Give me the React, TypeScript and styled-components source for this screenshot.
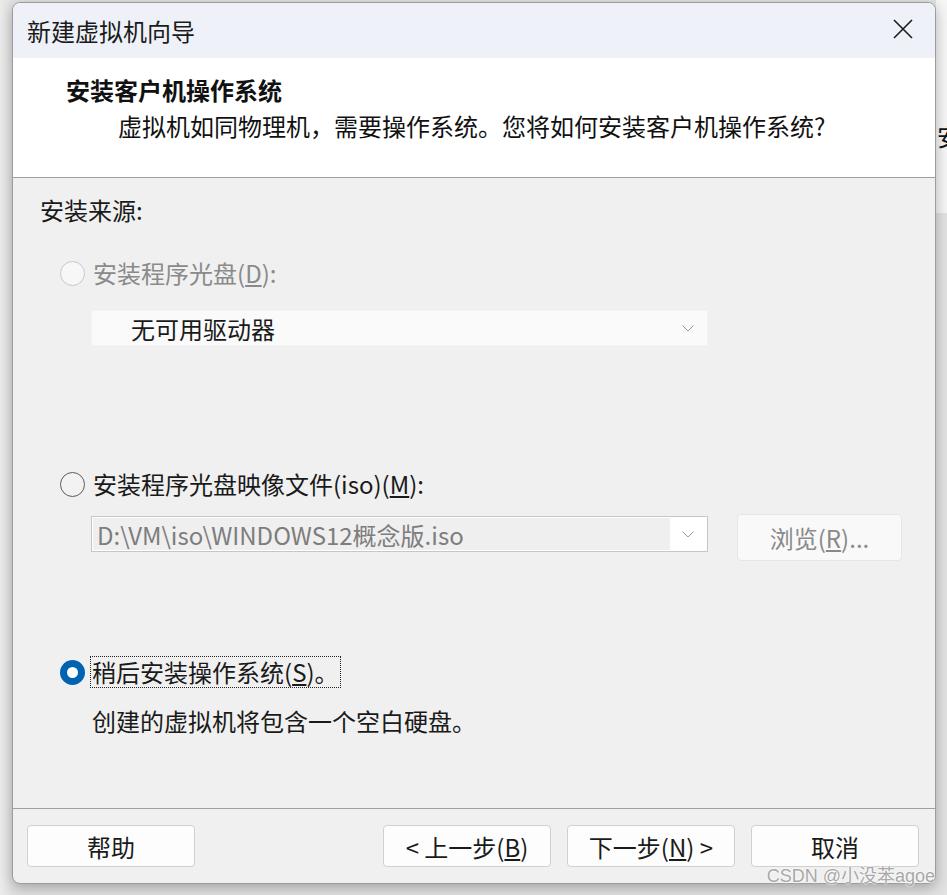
import { createGlobalStyle } from "styled-components";
import styled from "styled-components";

const FONT = `"Noto Sans CJK SC", "Noto Sans", sans-serif`;

const GlobalStyle = createGlobalStyle`
  html, body {
    margin: 0;
    padding: 0;
    background: #dedede;
    font-family: ${FONT};
  }
`;

type RadioState = "disabled" | "off" | "on";

export default function App() {
  return <Page>
    <GlobalStyle/>
    <Window>
      <TitleBar>
        <WindowTitle>新建虚拟机向导</WindowTitle>
        <CloseButton>
          <svg width="20" height="20" viewBox="0 0 20 20">
            <path d="M1 1 L19 19 M19 1 L1 19" stroke="#1b1b1b" strokeWidth="1.6" fill="none"/>
          </svg>
        </CloseButton>
      </TitleBar>

      <Header>
        <Heading>安装客户机操作系统</Heading>
        <Subheading>虚拟机如同物理机，需要操作系统。您将如何安装客户机操作系统?</Subheading>
      </Header>

      <Body>
        <SectionLabel>安装来源:</SectionLabel>
        <Options>
          <OptionRow>
            <Radio $state="disabled"/>
            <OptionLabel $disabled>安装程序光盘(<u>D</u>):</OptionLabel>
          </OptionRow>
          <SubRow $top={19}>
            <Select $disabled>
              <SelectText>无可用驱动器</SelectText>
              <Chevron/>
            </Select>
          </SubRow>

          <OptionRow $top={120}>
            <Radio $state="off"/>
            <OptionLabel>安装程序光盘映像文件(iso)(<u>M</u>):</OptionLabel>
          </OptionRow>
          <SubRow $top={12}>
            <Select>
              <SelectValue>D:\VM\iso\WINDOWS12概念版.iso</SelectValue>
              <Chevron/>
            </Select>
            <BrowseButton>浏览(<u>R</u>)...</BrowseButton>
          </SubRow>

          <OptionRow $top={93}>
            <Radio $state="on"/>
            <FocusLabel>稍后安装操作系统(<u>S</u>)。</FocusLabel>
          </OptionRow>
          <Note>创建的虚拟机将包含一个空白硬盘。</Note>
        </Options>
      </Body>

      <Footer>
        <Button>帮助</Button>
        <Spacer/>
        <Button>&lt; 上一步(<u>B</u>)</Button>
        <Button>下一步(<u>N</u>) &gt;</Button>
        <Button>取消</Button>
      </Footer>

      <Watermark>CSDN @小没苯agoe</Watermark>
    </Window>
    <Backdrop>
      <BackdropText>安</BackdropText>
    </Backdrop>
  </Page>
}

function Chevron() {
  return <ChevronBox>
    <svg width="12" height="7" viewBox="0 0 12 7">
      <polyline points="0.5,0.5 6,6 11.5,0.5" stroke="#9a9a9a" strokeWidth="1" fill="none"/>
    </svg>
  </ChevronBox>
}

const Page = styled.div`
  display: flex;
  align-items: flex-start;
  width: 947px;
  height: 895px;
  padding-top: 2px;
  box-sizing: border-box;
  overflow: hidden;
  background: linear-gradient(90deg, #ececec 0px, #e2e2e2 12px);
`;

const Window = styled.div`
  position: relative;
  display: flex;
  flex-direction: column;
  flex: none;
  width: 924px;
  height: 882px;
  margin-left: 12px;
  box-sizing: border-box;

  border: 1px solid #9c9c9c;
  border-radius: 8px;
  background: #f0f0f0;
  box-shadow: 0 4px 14px rgba(0, 0, 0, 0.28);
`;

const TitleBar = styled.div`
  display: flex;
  align-items: center;
  justify-content: space-between;
  height: 55px;
  padding: 0 22px 0 14px;
  border-radius: 7px 7px 0 0;
  background: #eef2f8;
`;

const WindowTitle = styled.div`
  font-size: 24px;
  color: #1a1a1a;
`;

const CloseButton = styled.div`
  display: flex;
  width: 20px;
  height: 20px;
  margin-top: -4px;
`;

const Header = styled.div`
  height: 120px;
  padding: 14px 0 0 53px;
  box-sizing: border-box;
  background: #ffffff;
  border-bottom: 1px solid #a0a0a0;
`;

const Heading = styled.div`
  font-size: 24px;
  font-weight: 700;
  line-height: 36px;
  color: #111;
`;

const Subheading = styled.div`
  margin-left: 52px;
  font-size: 24px;
  line-height: 36px;
  color: #111;
`;

const Body = styled.div`
  display: flex;
  flex-direction: column;
  height: 631px;
  padding: 14px 0 0 27px;
  box-sizing: border-box;
  border-bottom: 1px solid #a0a0a0;
`;

const SectionLabel = styled.div`
  font-size: 24px;
  line-height: 36px;
  color: #1a1a1a;
`;

const Options = styled.div`
  display: flex;
  flex-direction: column;
  padding: 27px 0 0 20px;
`;

const OptionRow = styled.div<{ $top?: number }>`
  display: flex;
  align-items: center;
  gap: 8px;
  height: 36px;
  margin-top: ${p => p.$top ?? 0}px;
`;

const Radio = styled.span<{ $state: RadioState }>`
  flex: none;
  width: 25px;
  height: 25px;
  box-sizing: border-box;
  border-radius: 50%;
  border: ${p => p.$state === "on" ? "7px solid #0063b1"
    : p.$state === "off" ? "1.5px solid #5c5c5c" : "1.5px solid #c8c8c8"};
  background: ${p => p.$state === "on" ? "#ffffff" : p.$state === "off" ? "#f2f2f2" : "#f7f7f7"};
`;

const OptionLabel = styled.span<{ $disabled?: boolean }>`
  font-size: 24px;
  line-height: 36px;
  color: ${p => p.$disabled ? "#8a8a8a" : "#1a1a1a"};
  white-space: nowrap;
`;

const FocusLabel = styled(OptionLabel)`
  height: 30px;
  line-height: 30px;
  margin-left: -2px;
  padding: 0 1px;
  outline: 1px dotted #222;
`;

const SubRow = styled.div<{ $top: number }>`
  display: flex;
  align-items: flex-start;
  gap: 29px;
  margin: ${p => p.$top}px 0 0 31px;
`;

const Select = styled.div<{ $disabled?: boolean }>`
  display: flex;
  align-items: center;
  width: 617px;
  height: 36px;
  margin-top: ${p => p.$disabled ? 0 : 2}px;
  padding: 1px;
  box-sizing: border-box;
  background: ${p => p.$disabled ? "#fafafa" : "#ffffff"};
  border: 1px solid ${p => p.$disabled ? "#f2f2f2" : "#c6c6c6"};
`;

const SelectText = styled.span`
  flex: 1;
  padding-left: 38px;
  font-size: 24px;
  color: #1a1a1a;
`;

const SelectValue = styled.span`
  flex: 1;
  align-self: stretch;
  display: flex;
  align-items: center;
  padding-left: 4px;
  background: #efefef;
  font-size: 24px;
  color: #7d7d7d;
  white-space: nowrap;
`;

const ChevronBox = styled.span`
  display: flex;
  justify-content: center;
  width: 36px;
`;

const BrowseButton = styled.div`
  display: flex;
  align-items: center;
  justify-content: center;
  width: 165px;
  height: 47px;
  box-sizing: border-box;
  border: 1px solid #e6e6e6;
  border-radius: 4px;
  background: #f9f9f9;
  font-size: 24px;
  color: #8a8a8a;
`;

const Note = styled.div`
  margin: 13px 0 0 32px;
  font-size: 24px;
  line-height: 36px;
  color: #1a1a1a;
`;

const Footer = styled.div`
  display: flex;
  align-items: flex-start;
  gap: 16px;
  flex: 1;
  padding: 16px 16px 0 14px;
`;

const Spacer = styled.div`
  flex: 1;
`;

const Button = styled.div`
  display: flex;
  align-items: center;
  justify-content: center;
  width: 168px;
  height: 42px;
  box-sizing: border-box;
  border: 1px solid #d0d0d0;
  border-radius: 4px;
  background: #fdfdfd;
  font-size: 24px;
  color: #1a1a1a;
  white-space: nowrap;
`;

const Watermark = styled.div`
  position: absolute;
  right: 0;
  bottom: -5px;
  font-family: "Liberation Sans", "Noto Sans CJK SC", sans-serif;
  font-size: 18px;
  line-height: 24px;
  color: #a8a8a8;
  text-shadow: 0 0 2px #ffffff, 0 0 2px #ffffff;
  white-space: nowrap;
`;

const Backdrop = styled.div`
  flex: none;
  width: 40px;
  height: 213px;
  margin-top: -2px;
  padding-top: 118px;
  box-sizing: border-box;
  background: #f6f6f6;
`;

const BackdropText = styled.div`
  margin-left: 1px;
  font-size: 24px;
  color: #111;
`;
